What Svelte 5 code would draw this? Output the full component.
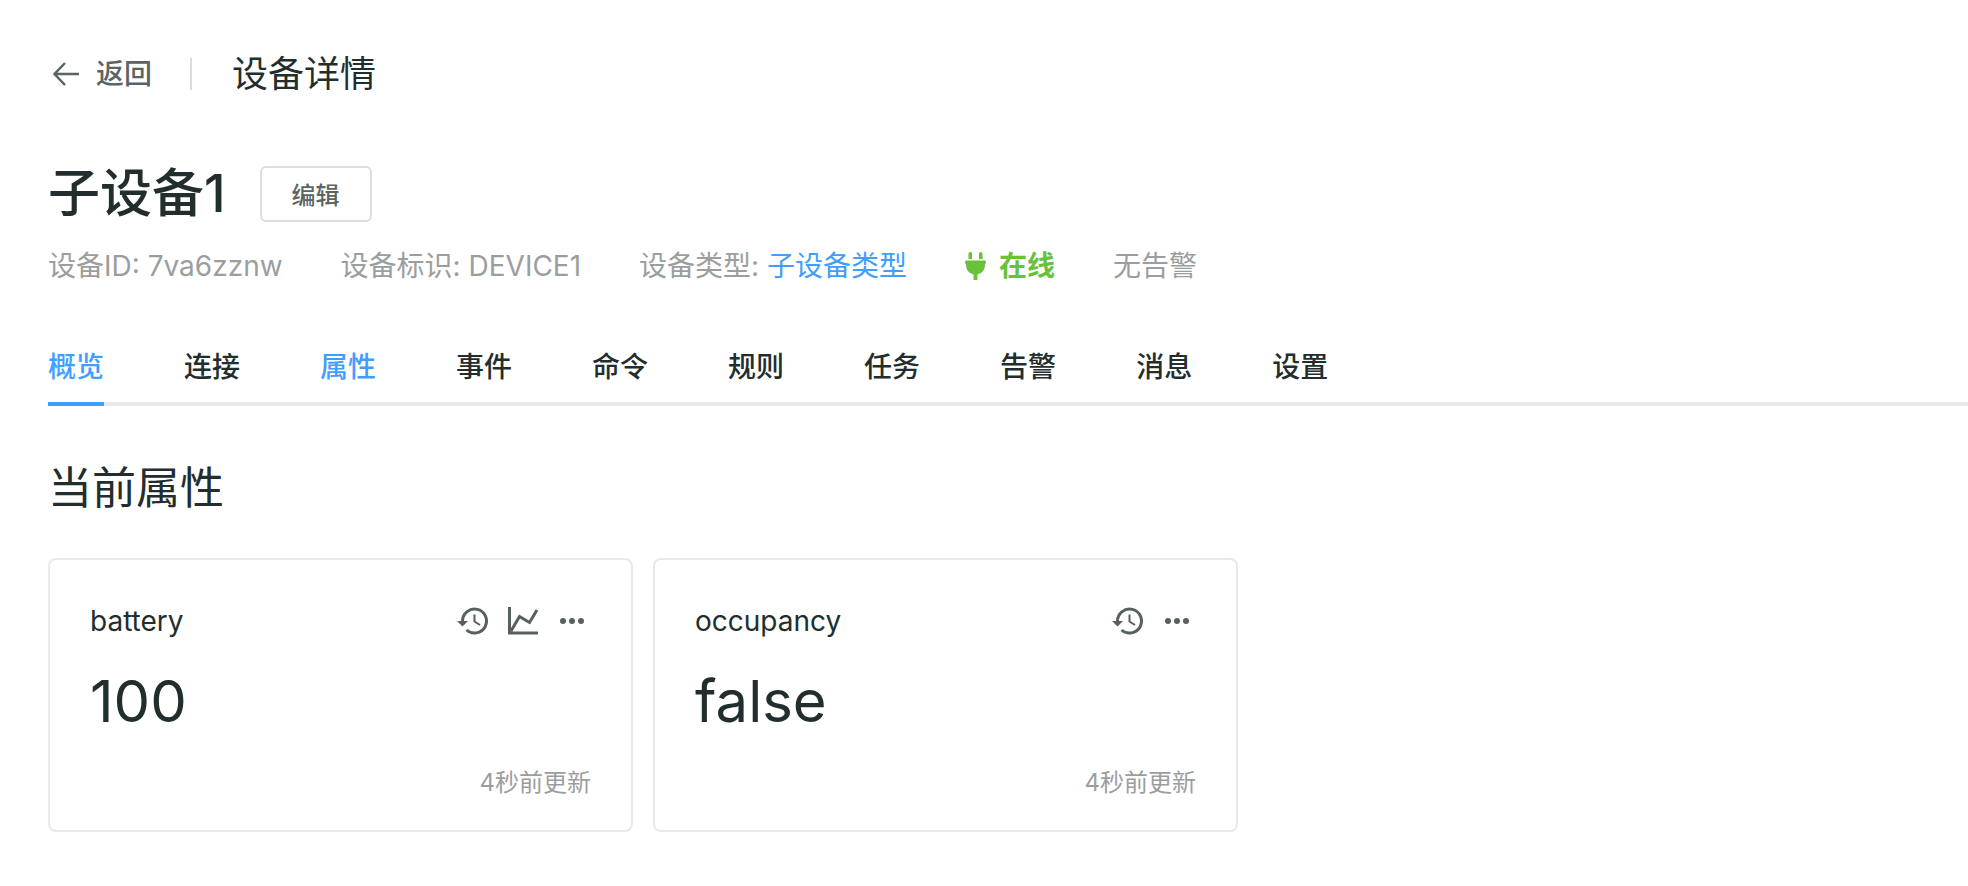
<script>
    let device = {
        name: "子设备1",
        id: "7va6zznw",
        key: "DEVICE1",
        type: "子设备类型"
    };

    let tabs = ["概览", "连接", "属性", "事件", "命令", "规则", "任务", "告警", "消息", "设置"];
    let active = "概览";
    let highlighted = "属性";

    let attributes = [
        { name: "battery", value: "100", updated: "4秒前更新", chart: true },
        { name: "occupancy", value: "false", updated: "4秒前更新", chart: false }
    ];
</script>

<main class="page">
    <header class="top-bar">
        <a class="back" href="#back">
            <svg width="28" height="28" viewBox="0 0 28 28" aria-hidden="true">
                <path d="M27 14H3M13 3 2.5 14 13 25" />
            </svg>
            <span>返回</span>
        </a>
        <span class="divider"></span>
        <span class="top-title">设备详情</span>
    </header>

    <div class="name-row">
        <h1>{device.name}</h1>
        <button class="edit">编辑</button>
    </div>

    <div class="meta">
        <span>设备ID: {device.id}</span>
        <span>设备标识: {device.key}</span>
        <span>设备类型: <a href="#type">{device.type}</a></span>
        <span class="online">
            <svg width="22" height="28" viewBox="0 0 22 28" aria-hidden="true">
                <path d="M3.500 1.500Q3.500 0 5.200 0T7 1.500V7H3.500ZM14 1.500Q14 0 15.700 0T17.500 1.500V7H14ZM1 8.500H20Q21 8.500 21 10T20 12V13Q20 20.500 12.400 22.500V28H8.600V22.500Q1 20.500 1 13V12Q0 12 0 10 0 8.500 1 8.500Z" />
            </svg>
            <strong>在线</strong>
        </span>
        <span>无告警</span>
    </div>

    <nav class="tabs">
        {#each tabs as tab}
            <a href="#{tab}" class:active={tab === active} class:highlighted={tab === highlighted}>{tab}</a>
        {/each}
    </nav>

    <h2>当前属性</h2>
    <section class="cards">
        {#each attributes as item}
            <article class="card">
                <div class="card-head">
                    <h3>{item.name}</h3>
                    <div class="tools">
                        <button class="tool" aria-label="历史">
                            <svg width="32" height="28" viewBox="0 0 32 28">
                                <path class="line" d="M5.500 14A12 12 0 1 1 9.500 23" />
                                <path class="line hand" d="M17.500 7.500V14.500L23 18" />
                                <path d="M0 14H11L5.500 19.500Z" />
                            </svg>
                        </button>
                        {#if item.chart}
                            <button class="tool" aria-label="图表">
                                <svg width="32" height="28" viewBox="0 0 32 28">
                                    <path class="line" d="M2.500 0V26H31M4 24 12.500 9.500 22.500 15.500 30 3" />
                                </svg>
                            </button>
                        {/if}
                        <button class="tool" aria-label="更多">
                            <svg width="32" height="28" viewBox="0 0 32 28">
                                <circle cx="6" cy="14" r="3" />
                                <circle cx="15" cy="14" r="3" />
                                <circle cx="24" cy="14" r="3" />
                            </svg>
                        </button>
                    </div>
                </div>
                <p class="value">{item.value}</p>
                <p class="updated">{item.updated}</p>
            </article>
        {/each}
    </section>
</main>

<style>
    :global(body) {
        background: #fff;
    }

    .page {
        color: #222e2d;
        font-family: Inter, "Noto Sans CJK SC", sans-serif;
        font-size: 28px;
        line-height: 40px;
        padding: 50px 0 54px 48px;
    }

    h1, h2, h3, p {
        margin: 0;
    }

    a {
        color: #409eff;
        text-decoration: none;
    }

    button {
        background: none;
        cursor: pointer;
        font-family: inherit;
    }

    svg {
        display: block;
    }

    /* top bar */
    .top-bar {
        align-items: center;
        display: flex;
        height: 48px;
    }

    .back {
        align-items: center;
        color: #5b6463;
        display: flex;
        font-weight: 500;
        gap: 16px;
        padding-left: 4px;
    }

    .back path {
        fill: none;
        stroke: #5b6463;
        stroke-width: 2.500;
    }

    .divider {
        background: #d9dde1;
        height: 32px;
        margin: 0 40px 0 38px;
        width: 2px;
    }

    .top-title {
        font-size: 36px;
    }

    /* device name */
    .name-row {
        align-items: center;
        display: flex;
        gap: 34px;
        margin-top: 68px;
    }

    h1 {
        font-size: 52px;
        font-weight: 500;
        line-height: 56px;
    }

    .edit {
        border: 2px solid #dadde1;
        border-radius: 6px;
        color: #5b6463;
        font-size: 24px;
        font-weight: 500;
        height: 56px;
        padding: 0 30px 2px;
    }

    .meta {
        color: #9b9e9e;
        display: flex;
        gap: 58px;
        margin-top: 24px;
    }

    .online {
        align-items: center;
        color: #67c23a;
        display: flex;
        gap: 12px;
    }

    .online path {
        fill: #67c23a;
    }

    /* tabs */
    .tabs {
        border-bottom: 4px solid #e8e9ef;
        display: flex;
        gap: 80px;
        margin-top: 61px;
    }

    .tabs a {
        border-bottom: 4px solid transparent;
        color: #222e2d;
        font-weight: 500;
        margin-bottom: -4px;
        padding-bottom: 15px;
    }

    .tabs .active {
        border-color: #409eff;
        color: #409eff;
    }

    .tabs .highlighted {
        color: #409eff;
    }

    /* attribute cards */
    h2 {
        font-size: 44px;
        font-weight: 400;
        line-height: 56px;
        margin-top: 54px;
    }

    .cards {
        display: grid;
        gap: 20px;
        grid-template-columns: repeat(3, 1fr);
        margin-top: 42px;
        padding-right: 125px;
    }

    .card {
        border: 2px solid #e8e9ef;
        border-radius: 8px;
        padding: 41px 40px 31px;
    }

    .card-head {
        align-items: center;
        display: flex;
        justify-content: space-between;
    }

    h3 {
        font-size: 28px;
        font-weight: 400;
    }

    .tools {
        display: flex;
        gap: 18px;
        padding-right: 2px;
    }

    .tool {
        border: 0;
        padding: 0;
    }

    .tool svg {
        fill: #56605f;
    }

    .tool .line {
        fill: none;
        stroke: #56605f;
        stroke-width: 3;
    }

    .tool .hand {
        stroke-width: 2;
    }

    .value {
        font-size: 58px;
        line-height: 72px;
        margin-top: 24px;
    }

    .updated {
        color: #9b9e9e;
        font-size: 24px;
        line-height: 32px;
        margin-top: 30px;
        text-align: right;
    }
</style>
